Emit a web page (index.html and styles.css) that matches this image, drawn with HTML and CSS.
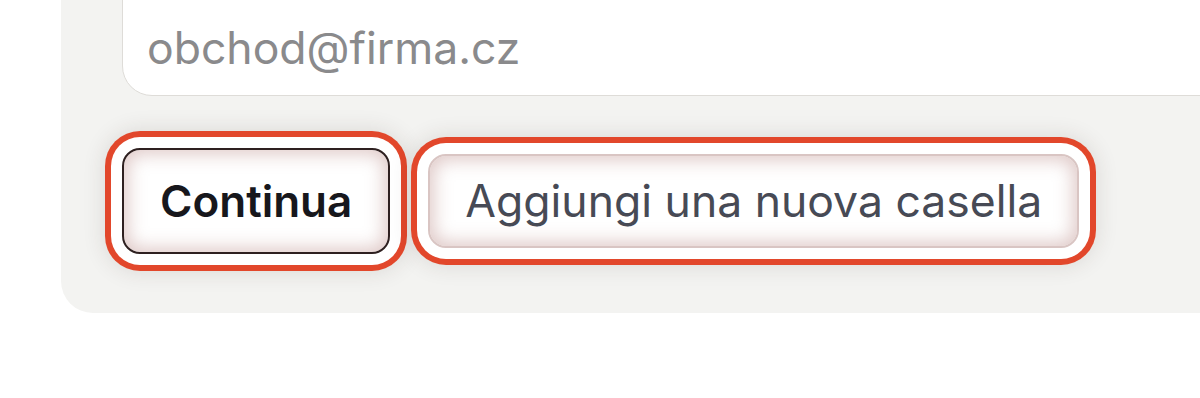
FILE: index.html
```html
<!DOCTYPE html>
<html lang="it">
<head>
<meta charset="utf-8">
<title>Casella</title>
<link rel="stylesheet" href="styles.css">
</head>
<body>
  <div class="panel">
    <div class="field">
      <input class="input" type="email" placeholder="obchod@firma.cz">
    </div>
    <div class="actions">
      <button class="btn btn-primary" type="button">Continua</button>
      <button class="btn btn-secondary" type="button">Aggiungi una nuova casella</button>
    </div>
  </div>
</body>
</html>
```
FILE: styles.css
```css
html, body {
  margin: 0;
  padding: 0;
  background: #ffffff;
  overflow: hidden;
}

body {
  font-family: Inter, "Liberation Sans", sans-serif;
}

.panel {
  margin: -30px -60px 0 61px;
  padding: 0 0 59px 61px;
  background: #f3f3f1;
  border-radius: 0 0 0 32px;
}

.field {
  display: flex;
}

.input {
  flex: 1;
  box-sizing: border-box;
  height: 126px;
  padding: 30px 25px 0 24px;
  border: 1.5px solid #dedcd8;
  border-radius: 30px;
  background: #ffffff;
  font-family: inherit;
  font-size: 44.5px;
  color: #333;
  outline: none;
}

.input::placeholder {
  color: #8a8a8c;
}

.actions {
  display: flex;
  align-items: center;
  gap: 38px;
  margin-top: 52px;
}

.btn {
  box-sizing: border-box;
  font-family: inherit;
  background: #ffffff;
  border-radius: 18px;
  cursor: pointer;
  white-space: nowrap;
}

.btn-primary {
  height: 106px;
  padding: 0 36px;
  font-size: 44px;
  font-weight: 600;
  color: #17171c;
  border: 2px solid #2e2020;
  box-shadow:
    inset 0 0 18px 4px rgba(185, 135, 130, 0.45),
    0 0 0 11px #ffffff,
    0 0 0 17px #e2472b,
    0 0 22px 18px rgba(60, 40, 30, 0.12);
}

.btn-secondary {
  height: 94px;
  padding: 0 35px;
  font-size: 44.5px;
  font-weight: 400;
  color: #474a55;
  border: 2px solid #d9c5c3;
  box-shadow:
    inset 0 0 18px 4px rgba(185, 135, 130, 0.45),
    0 0 0 11px #ffffff,
    0 0 0 17px #e2472b,
    0 0 22px 18px rgba(60, 40, 30, 0.12);
}
```
